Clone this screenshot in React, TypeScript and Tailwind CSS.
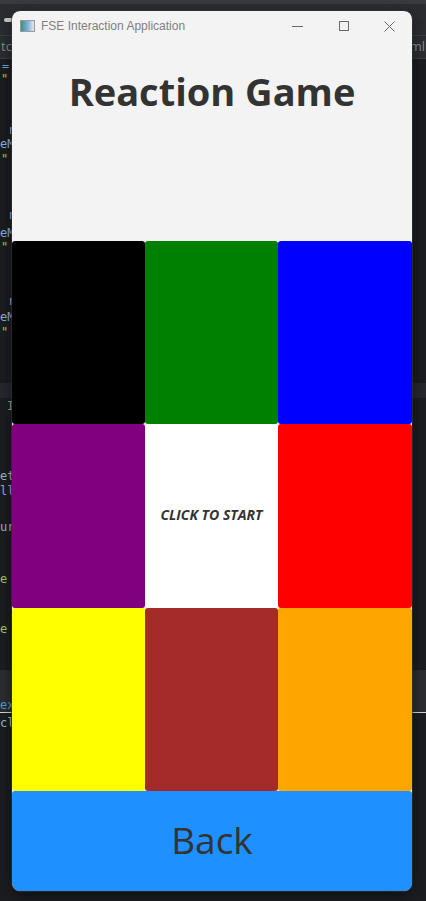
import React from "react";

const cells = [
  "bg-[#000000]",
  "bg-[#008000]",
  "bg-[#0000ff]",
  "bg-[#800080]",
  "bg-white",
  "bg-[#ff0000]",
  "bg-[#ffff00]",
  "bg-[#a52a2a]",
  "bg-[#ffa500]",
];

// visible ends of code lines on the left edge of the editor
const codeLines: { y: string; text: string; color: string; pad: string }[] = [
  { y: "h-[13px]", text: "=:", color: "text-[#6fa8dc]", pad: "pl-[2px]" },
  { y: "h-[51px]", text: "\"", color: "text-[#c9c26a]", pad: "pl-[1px]" },
  { y: "h-[14px]", text: "r", color: "text-[#8fb4e0]", pad: "pl-[8px]" },
  { y: "h-[15px]", text: "eM", color: "text-[#8fb4e0]", pad: "pl-0" },
  { y: "h-[56px]", text: "\"", color: "text-[#c9c26a]", pad: "pl-[1px]" },
  { y: "h-[18px]", text: "r", color: "text-[#8fb4e0]", pad: "pl-[8px]" },
  { y: "h-[14px]", text: "eM", color: "text-[#8fb4e0]", pad: "pl-0" },
  { y: "h-[54px]", text: "\"", color: "text-[#c9c26a]", pad: "pl-[1px]" },
  { y: "h-[16px]", text: "r", color: "text-[#8fb4e0]", pad: "pl-[8px]" },
  { y: "h-[15px]", text: "eM", color: "text-[#8fb4e0]", pad: "pl-0" },
  { y: "h-[57px]", text: "\"", color: "text-[#c9c26a]", pad: "pl-[1px]" },
];

export default function App() {
  return (
    <div className="relative w-[426px] h-[901px] overflow-hidden bg-[#1b1d20] font-['Open_Sans',sans-serif]">
      {/* IDE behind the window */}
      <div className="flex flex-col">
        <div className="h-[4px] bg-[#393b3f]" />
        <div className="h-[31px] bg-[#2b2d30] flex items-center">
          <div className="ml-[4px] w-[9px] h-[4px] rounded-sm bg-[#d0d0d0]" />
        </div>
        <div className="h-[1px] bg-[#3c3f44]" />
        <div className="h-[22px] bg-[#2b2d30] flex items-center justify-between px-[1px] text-[13px] text-[#8a8d92]">
          <span>tc</span>
          <span>ml</span>
        </div>
        <div className="h-[1px] bg-[#3c3f44]" />
        <div className="flex flex-col font-['DejaVu_Sans_Mono',monospace] text-[12px] leading-[12px] pt-[1px]">
          {codeLines.map((l, i) => (
            <div key={i} className={`${l.y} ${l.color} ${l.pad} whitespace-pre`}>{l.text}</div>
          ))}
          <div className="h-[15px] bg-[#26282d]" />
          <div className="h-[72px] text-[#8fb07a] pl-[7px] pt-[2px]">I</div>
          <div className="h-[15px] text-[#a9b7c6]">et</div>
          <div className="h-[36px] text-[#8fb4e0]">ll</div>
          <div className="h-[52px] text-[#a9b7c6]">ur</div>
          <div className="h-[50px] text-[#b5c46a]">e</div>
          <div className="h-[47px] text-[#b5c46a]">e</div>
          <div className="h-[43px] bg-[#2b2d30] flex flex-col justify-end">
            <div className="h-[14px] text-[#5aa0c8] border-b border-[#d8d8d8]">exe</div>
          </div>
          <div className="h-[20px] text-[#a9b7c6] pt-[4px]">cl</div>
        </div>
      </div>

      {/* application window */}
      <div className="absolute left-[12px] top-[11px] w-[400px] h-[880px] rounded-[8px] overflow-hidden bg-[#f3f3f3] flex flex-col outline outline-1 outline-[#3a3a3a]/50 shadow-[0_4px_16px_rgba(0,0,0,0.5)]">
        <div className="h-[30px] shrink-0 flex items-center pl-[8px] pr-[17px] font-['Liberation_Sans',sans-serif]">
          <div className="w-[15px] h-[12px] border border-[#9a9a9a] bg-gradient-to-r from-[#3f8f7a] via-[#7ab0d8] to-[#e8e8e8]" />
          <span className="ml-[6px] text-[12px] text-[#808080]">FSE Interaction Application</span>
          <div className="ml-auto flex items-center">
            <div className="w-[11px] h-[1px] bg-[#6a6a6a]" />
            <div className="ml-[36px] w-[10px] h-[10px] border border-[#6a6a6a]" />
            <svg className="ml-[35px]" width="11" height="11" viewBox="0 0 11 11">
              <path d="M0.5 0.5 L10.5 10.5 M10.5 0.5 L0.5 10.5" stroke="#6a6a6a" strokeWidth="1" />
            </svg>
          </div>
        </div>

        <div className="h-[200px] shrink-0 flex justify-center pt-[21px]">
          <h1 className="text-[38px] font-bold text-[#333333] leading-[58px]">Reaction Game</h1>
        </div>

        <div className="h-[550px] shrink-0 grid grid-cols-[133px_133px_134px] grid-rows-3">
          {cells.map((c, i) => (
            <div key={i} className={`${c} rounded-[3px] flex items-center justify-center`}>
              {i === 4 && (
                <span className="text-[14px] font-bold italic text-[#333333] -mt-[2px]">CLICK TO START</span>
              )}
            </div>
          ))}
        </div>

        <div className="flex-1 bg-[#1e90ff] rounded-[3px] flex items-center justify-center">
          <span className="text-[37px] text-[#333333] leading-none -mt-[3px]">Back</span>
        </div>
      </div>
    </div>
  );
}
